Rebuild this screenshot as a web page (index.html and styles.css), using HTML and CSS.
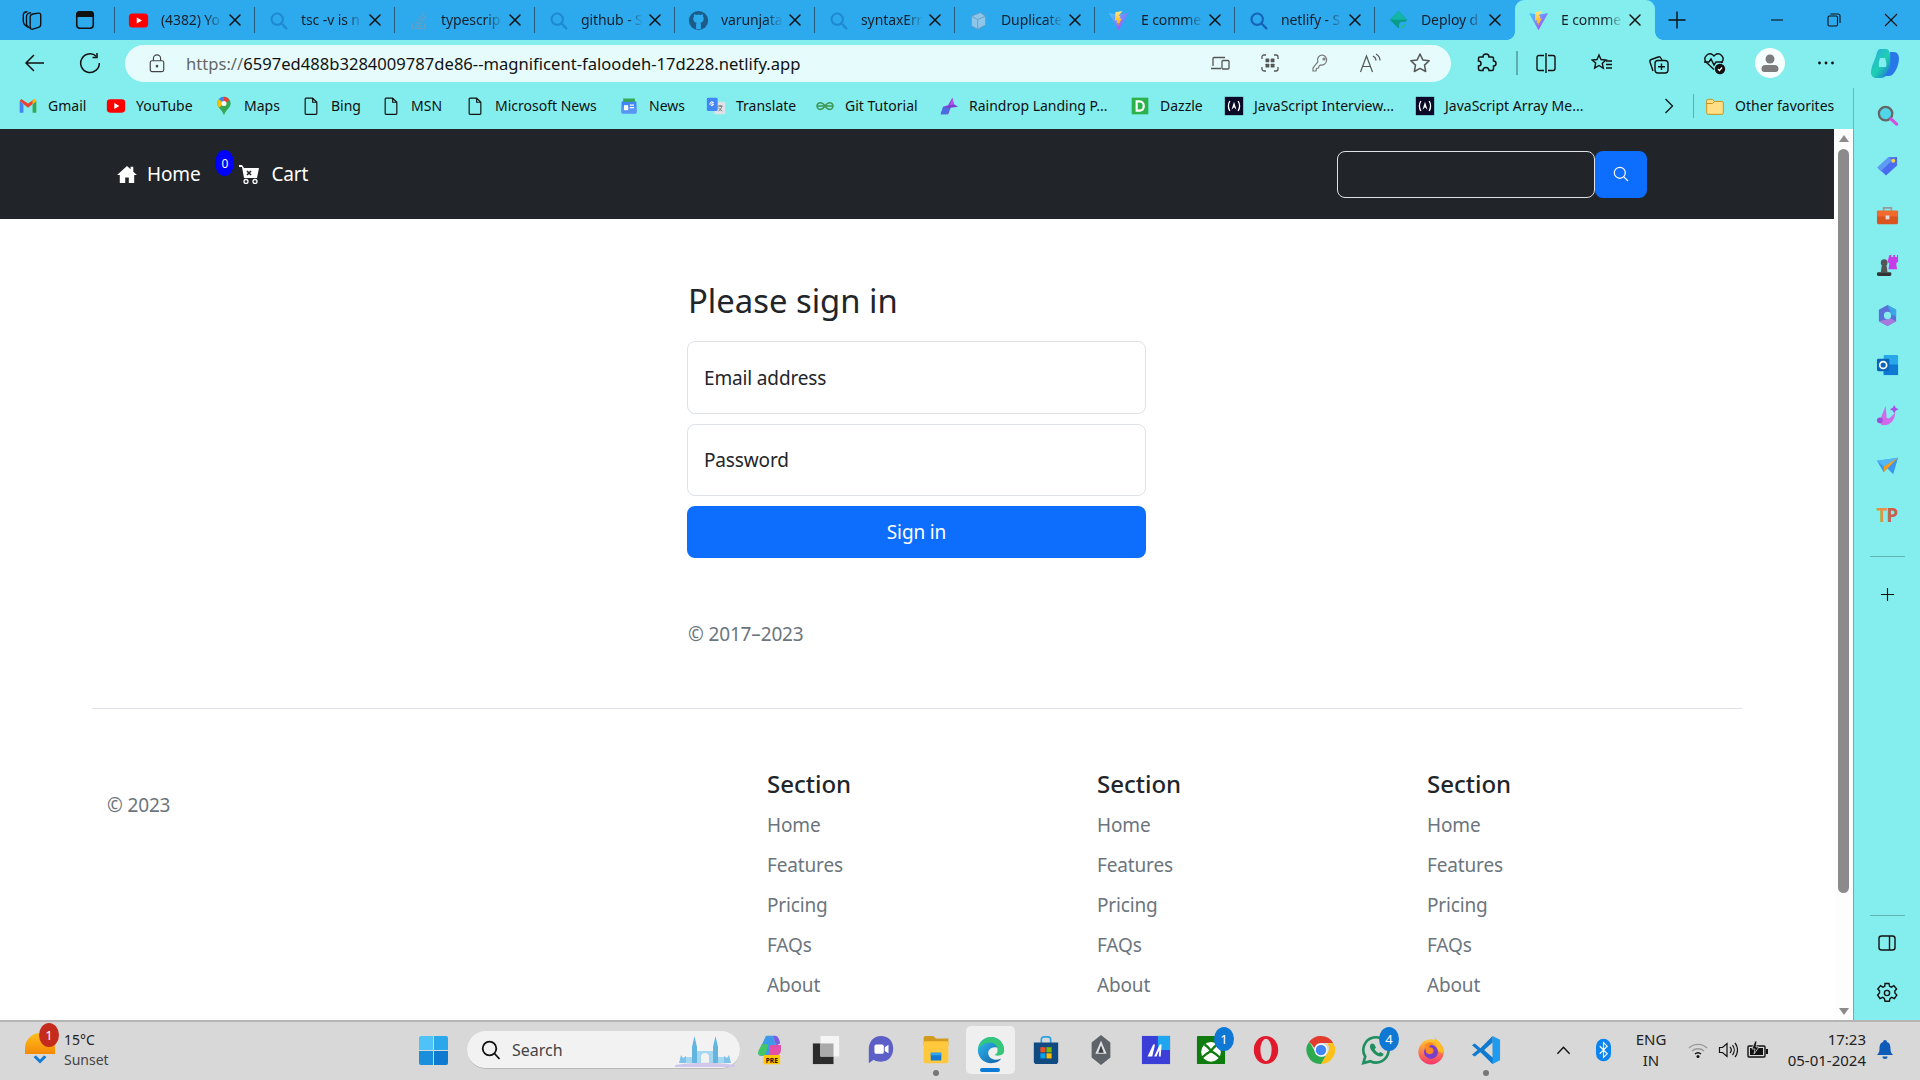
FILE: index.html
```html
<!DOCTYPE html>
<html lang="en">
<head>
<meta charset="utf-8">
<title>E commerce</title>
<link rel="stylesheet" href="styles.css">
</head>
<body>
<svg class="sprite" aria-hidden="true">
  <defs>
    <linearGradient id="g-vite" x1="0" y1="0" x2="1" y2="1"><stop offset="0" stop-color="#41d1ff"/><stop offset="1" stop-color="#bd34fe"/></linearGradient>
    <linearGradient id="g-bolt" x1="0" y1="0" x2="0" y2="1"><stop offset="0" stop-color="#ffea83"/><stop offset="1" stop-color="#ffa800"/></linearGradient>
    <linearGradient id="g-edge" x1="0" y1="0" x2="1" y2="1"><stop offset="0" stop-color="#35c1f1"/><stop offset="1" stop-color="#0c59a4"/></linearGradient>
    <linearGradient id="g-copilot" x1="0" y1="0" x2="1" y2="1"><stop offset="0" stop-color="#2aa7e8"/><stop offset=".5" stop-color="#1fd0b0"/><stop offset="1" stop-color="#1b5fe0"/></linearGradient>
    <linearGradient id="g-fox" x1="0" y1="0" x2="0" y2="1"><stop offset="0" stop-color="#ffcb2e"/><stop offset="1" stop-color="#f5336e"/></linearGradient>
    <linearGradient id="g-sun" x1="0" y1="0" x2="0" y2="1"><stop offset="0" stop-color="#ffbf1f"/><stop offset="1" stop-color="#f58a07"/></linearGradient>
    <symbol id="i-yt" viewBox="0 0 24 24"><rect x="1" y="4" width="22" height="16" rx="4" fill="#f00"/><path d="M10 8.5l6 3.5-6 3.5z" fill="#fff"/></symbol>
    <symbol id="i-search" viewBox="0 0 24 24"><circle cx="10.5" cy="10.5" r="6.5" fill="none" stroke="currentColor" stroke-width="2.4"/><path d="M15.5 15.5L21 21" stroke="currentColor" stroke-width="2.6" stroke-linecap="round"/></symbol>
    <symbol id="i-close" viewBox="0 0 14 14"><path d="M2 2l10 10M12 2L2 12" stroke="#111" stroke-width="1.5" stroke-linecap="round"/></symbol>
    <symbol id="i-doc" viewBox="0 0 24 24"><path d="M6 2.5h8l5 5V21a1 1 0 0 1-1 1H6a1 1 0 0 1-1-1V3.5a1 1 0 0 1 1-1zM14 2.5v5h5" fill="none" stroke="#111" stroke-width="1.4" stroke-linejoin="round"/></symbol>
    <symbol id="i-vite" viewBox="0 0 24 24"><path d="M1 3.5L12 23 23 3.5 12 5.5z" fill="url(#g-vite)"/><path d="M16.5 1L8.5 2.6l-.6 9.6 2.6-.6-.7 3.5 2.2-.5-.7 3.6 4.6-8.8-2.6.5.9-3.2-2.4.5z" fill="url(#g-bolt)"/></symbol>
    <symbol id="i-js" viewBox="0 0 24 24"><rect x="1" y="1" width="22" height="22" fill="#0a0a28"/><path d="M7 6Q3.6 12 7 18M17 6q3.4 6 0 12" fill="none" stroke="#fff" stroke-width="1.6"/><path d="M9 16.5L12 7l3 9.5-3-3z" fill="#fff"/></symbol>
    <symbol id="i-star" viewBox="0 0 24 24"><path d="M12 3l2.8 5.9 6.4.8-4.7 4.4 1.2 6.4L12 17.4l-5.7 3.1 1.2-6.4-4.7-4.4 6.4-.8z" fill="none" stroke="currentColor" stroke-width="1.5" stroke-linejoin="round"/></symbol>
  </defs>
</svg>

<div class="screen">
  <header class="tabstrip">
    <div class="tab-lead">
      <button class="strip-btn"><svg class="ic22" viewBox="0 0 24 24" fill="none" stroke="#111" stroke-width="1.5"><path d="M8 20C4 18 2.5 16 2.5 13V6.5C2.5 4 4 3 7 3M11 21c-3-1-5-2.500-5-5V8c0-3 2-3.500 5-4"/><path d="M10 8.5c0-2 1-2.500 3-3l6-1c1.500-.2 2.500.5 2.500 2v10c0 2-.8 3-2.500 3.500l-6 2c-2 .5-3-.5-3-2z"/></svg></button>
      <button class="strip-btn"><svg class="ic22" viewBox="0 0 24 24" fill="none" stroke="#111" stroke-width="1.7"><rect x="3" y="3" width="18" height="18" rx="3.5"/><path d="M3 6.5A3.500 3.500 0 0 1 6.500 3h11A3.500 3.500 0 0 1 21 6.500V8H3z" fill="#111"/></svg></button>
    </div>
    <div class="tab"><svg class="fav"><use href="#i-yt"/></svg><span class="tab-t">(4382) Yo</span><svg class="tab-x"><use href="#i-close"/></svg></div>
    <div class="tab"><svg class="fav dim"><use href="#i-search"/></svg><span class="tab-t">tsc -v is n</span><svg class="tab-x"><use href="#i-close"/></svg></div>
    <div class="tab"><svg class="fav" viewBox="0 0 24 24" fill="none" stroke="#5fa0c8" stroke-width="1.6"><path d="M5 15v6h14v-6"/><path d="M8 18h8M8.500 14.500l7.500 1M10 10.500l7 2.500M12.500 6.500l6 4.500M16 3l4 6.500"/></svg><span class="tab-t">typescrip</span><svg class="tab-x"><use href="#i-close"/></svg></div>
    <div class="tab"><svg class="fav dim"><use href="#i-search"/></svg><span class="tab-t">github - S</span><svg class="tab-x"><use href="#i-close"/></svg></div>
    <div class="tab"><svg class="fav" viewBox="0 0 24 24"><circle cx="12" cy="12" r="11" fill="#1c5a87"/><path d="M12 5c-1 0-2 .2-2.800.6C8 4.800 7 4.800 6.800 5c-.3.800-.2 1.700.1 2.300C6.300 8 6 9 6 10c0 3 1.800 4.300 4 4.600-.5.400-.7 1-.7 1.800V22h5.400v-5.600c0-.8-.2-1.400-.7-1.800 2.200-.3 4-1.600 4-4.600 0-1-.3-2-.9-2.700.3-.6.400-1.500.1-2.300-.2-.2-1.200-.2-2.400.6C14 5.200 13 5 12 5z" fill="#2caaee"/></svg><span class="tab-t">varunjata</span><svg class="tab-x"><use href="#i-close"/></svg></div>
    <div class="tab"><svg class="fav dim"><use href="#i-search"/></svg><span class="tab-t">syntaxErr</span><svg class="tab-x"><use href="#i-close"/></svg></div>
    <div class="tab"><svg class="fav" viewBox="0 0 24 24" fill="#8cc6ea" stroke="#6f9cb8" stroke-width="1"><path d="M4 7l10-4 6 4v10l-9 5-7-4z"/><path d="M4 7l7 4 9-4M11 11v11" fill="none"/></svg><span class="tab-t">Duplicate</span><svg class="tab-x"><use href="#i-close"/></svg></div>
    <div class="tab"><svg class="fav"><use href="#i-vite"/></svg><span class="tab-t">E comme</span><svg class="tab-x"><use href="#i-close"/></svg></div>
    <div class="tab"><svg class="fav strong"><use href="#i-search"/></svg><span class="tab-t">netlify - S</span><svg class="tab-x"><use href="#i-close"/></svg></div>
    <div class="tab no-sep"><svg class="fav" viewBox="0 0 24 24"><path d="M12 1l10 10-10 10L2 11z" fill="#0a9a8c"/><path d="M2 11h20L12 1z" fill="#13b5a5"/><circle cx="17" cy="18" r="4.5" fill="#2caaee"/><path d="M14.800 18l1.600 1.700 2.800-3.200" fill="none" stroke="#25c16f" stroke-width="1.5"/></svg><span class="tab-t">Deploy d</span><svg class="tab-x"><use href="#i-close"/></svg></div>
    <div class="tab active"><svg class="fav"><use href="#i-vite"/></svg><span class="tab-t">E comme</span><svg class="tab-x"><use href="#i-close"/></svg></div>
    <button class="plus"><svg class="ic20" viewBox="0 0 20 20"><path d="M10 1.500v17M1.500 10h17" stroke="#111" stroke-width="1.4"/></svg></button>
    <div class="win-btns">
      <button class="win-btn"><svg class="ic14" viewBox="0 0 14 14"><path d="M1 7h12" stroke="#111" stroke-width="1.1"/></svg></button>
      <button class="win-btn"><svg class="ic14" viewBox="0 0 14 14" fill="none" stroke="#111" stroke-width="1.1"><rect x="1" y="3" width="9.5" height="10" rx="1.5"/><path d="M3.500 1H11a2 2 0 0 1 2 2v7"/></svg></button>
      <button class="win-btn"><svg class="ic14" viewBox="0 0 14 14"><path d="M1 1l12 12M13 1L1 13" stroke="#111" stroke-width="1.1"/></svg></button>
    </div>
  </header>

  <div class="toolbar">
    <button class="nav-btn"><svg class="ic22" viewBox="0 0 22 22" fill="none" stroke="#111" stroke-width="1.5"><path d="M20 11H2.500M10 3l-8 8 8 8"/></svg></button>
    <button class="nav-btn"><svg class="ic22" viewBox="0 0 22 22" fill="none" stroke="#111" stroke-width="1.5"><path d="M17.500 4.500A9.300 9.300 0 1 0 20.300 11"/><path d="M18 1v4.500h-4.500"/></svg></button>
    <div class="address">
      <svg class="lock" viewBox="0 0 20 22" fill="none" stroke="#444" stroke-width="1.3"><rect x="2.5" y="8.5" width="15" height="12" rx="2"/><path d="M6 8.500V6a4 4 0 0 1 8 0v2.500"/><circle cx="10" cy="14.5" r=".8" fill="#444"/></svg>
      <div class="url"><span class="url-scheme">https://</span>6597ed488b3284009787de86--magnificent-faloodeh-17d228.netlify.app</div>
      <button class="addr-btn"><svg class="ic20" viewBox="0 0 20 20" fill="none" stroke="#555" stroke-width="1.3"><path d="M3 13V5.500a1 1 0 0 1 1-1h11M1 15.500h10"/><rect x="12" y="7.5" width="7" height="8.5" rx="1"/></svg></button>
      <button class="addr-btn"><svg class="ic20" viewBox="0 0 20 20" fill="none" stroke="#555" stroke-width="1.3"><path d="M2 6V4a2 2 0 0 1 2-2h2M14 2h2a2 2 0 0 1 2 2v2M18 14v2a2 2 0 0 1-2 2h-2M6 18H4a2 2 0 0 1-2-2v-2"/><rect x="5.500" y="5.500" width="3.8" height="3.8" rx=".6" fill="#555" stroke="none"/><rect x="10.700" y="5.500" width="3.8" height="3.8" rx=".6" fill="#555" stroke="none"/><rect x="5.500" y="10.700" width="3.8" height="3.8" rx=".6" fill="#555" stroke="none"/><rect x="10.700" y="10.700" width="3.8" height="3.8" rx=".6" fill="#555" stroke="none"/></svg></button>
      <button class="addr-btn"><svg class="ic20" viewBox="0 0 20 20" fill="none" stroke="#777" stroke-width="1.2"><path d="M12.500 2a5 5 0 0 0-4.700 6.800L3 15v3h3l.5-2.500 2-.5.5-2 1.500-1a5 5 0 1 0 2-10z"/><circle cx="14" cy="6" r="1"/></svg></button>
      <button class="addr-btn"><svg class="ic22" viewBox="0 0 22 22" fill="none" stroke="#555" stroke-width="1.2"><path d="M1.500 20L7.500 4l6 16M3.700 14.500h7.500M14 4c2 1 3 2.500 3 4.500M17 2c2.500 1.500 4 4 4 6.500"/></svg></button>
      <button class="addr-btn star"><svg class="ic24"><use href="#i-star"/></svg></button>
    </div>
    <button class="tool-btn first"><svg class="ic22" viewBox="0 0 22 22" fill="none" stroke="#111" stroke-width="1.5"><path d="M8 5a3 3 0 0 1 6 0h3a1.500 1.500 0 0 1 1.500 1.500V9a2.500 2.500 0 0 1 0 5v3a1.500 1.500 0 0 1-1.500 1.500h-3a3 3 0 0 0-6 0H5A1.500 1.500 0 0 1 3.500 17v-3a2.500 2.500 0 0 0 0-5V6.500A1.500 1.500 0 0 1 5 5z"/></svg></button>
    <span class="tool-sep"></span>
    <button class="tool-btn"><svg class="ic22" viewBox="0 0 22 22" fill="none" stroke="#111" stroke-width="1.4"><path d="M9 3.500H4a2 2 0 0 0-2 2v11a2 2 0 0 0 2 2h5M13 3.500h5a2 2 0 0 1 2 2v11a2 2 0 0 1-2 2h-5M11 1v20"/></svg></button>
    <button class="tool-btn"><svg class="ic22" viewBox="0 0 22 22" fill="none" stroke="#111" stroke-width="1.4"><path d="M8 3l2 4.500 5 .5-3.700 3.300 1 5L8 13.500 3.700 16l1-5L1 8l5-.5z"/><path d="M15 9h6M15 12.500h6M15 16h6"/></svg></button>
    <button class="tool-btn"><svg class="ic24" viewBox="0 0 24 24" fill="none" stroke="#111" stroke-width="1.4"><path d="M7 20l-3-9a2 2 0 0 1 1.300-2.500l7-2.500a2 2 0 0 1 2.500 1L16 9"/><rect x="9" y="9.5" width="13" height="12.5" rx="3"/><path d="M15.500 12.500v6.500M12 15.700h7"/></svg></button>
    <button class="tool-btn"><svg class="ic24" viewBox="0 0 24 24" fill="none" stroke="#111" stroke-width="1.4"><path d="M12 18.500L4 11a5 5 0 0 1 7-7l1 1 1-1a5 5 0 0 1 7 7l-1 1"/><path d="M2 11h5l2-3 3 6 2-3h7"/><circle cx="18" cy="18" r="4.5" fill="#111"/><path d="M16 18l1.500 1.500 2.500-3" stroke="#fff" stroke-width="1.2"/></svg></button>
    <button class="tool-btn"><span class="avatar"><svg class="ic20" viewBox="0 0 20 20" fill="#7c7c7c"><circle cx="10" cy="6" r="4.5"/><path d="M1.500 16a4 4 0 0 1 4-4h9a4 4 0 0 1 4 4 3 3 0 0 1-3 3h-11a3 3 0 0 1-3-3z"/></svg></span></button>
    <button class="tool-btn"><svg class="ic20" viewBox="0 0 20 20" fill="#111"><circle cx="3.5" cy="10" r="1.4"/><circle cx="10" cy="10" r="1.4"/><circle cx="16.5" cy="10" r="1.4"/></svg></button>
    <button class="tool-btn copilot"><svg class="ic32" viewBox="0 0 32 32"><path d="M11 2h6c2 0 3 1.500 3.500 3L24 18c-1 4-3 7-6 10-2 2-4 3-6 3H7c-2 0-5-2-5-5 0-6 3-11 5-17 1-4 2-7 4-7z" fill="url(#g-copilot)"/><path d="M21 5h4c3 0 5 3 5 6 0 5-2 11-5 15-1.500 2-3 3-5 3h-5c2-2 5-6 6-10 1-4 0-11 0-14z" fill="#2877e8"/><path d="M11 11l5 0c1 3 2 6 1 9l-7 0c-.5-3 0-6 1-9z" fill="#84eeee"/></svg></button>
  </div>

  <div class="workspace">
    <div class="main-col">
      <nav class="bookmarks">
        <a class="bm"><svg class="bm-i" viewBox="0 0 24 24"><path d="M2 6v14h4.500V10z" fill="#4285f4"/><path d="M22 6v14h-4.500V10z" fill="#34a853"/><path d="M2 6l10 8 10-8-2-2.500L12 9 4 3.500z" fill="#ea4335"/><path d="M17.500 10L22 6l-2-2.500-2.500 2z" fill="#fbbc04"/></svg>Gmail</a>
        <a class="bm"><svg class="bm-i"><use href="#i-yt"/></svg>YouTube</a>
        <a class="bm"><svg class="bm-i" viewBox="0 0 24 24"><path d="M12 1a8 8 0 0 0-8 8c0 5 6 8 8 14 2-6 8-9 8-14a8 8 0 0 0-8-8z" fill="#34a853"/><path d="M12 1a8 8 0 0 0-6 2.700L12 9V1z" fill="#4285f4"/><path d="M12 1v8l6.500-4A8 8 0 0 0 12 1z" fill="#ea4335"/><path d="M4 9c0 2 1 3.500 2 5l6-5-6-5a8 8 0 0 0-2 5z" fill="#fbbc04"/><circle cx="12" cy="9" r="3" fill="#fff"/></svg>Maps</a>
        <a class="bm"><svg class="bm-i"><use href="#i-doc"/></svg>Bing</a>
        <a class="bm"><svg class="bm-i"><use href="#i-doc"/></svg>MSN</a>
        <a class="bm"><svg class="bm-i"><use href="#i-doc"/></svg>Microsoft News</a>
        <a class="bm"><svg class="bm-i" viewBox="0 0 24 24"><rect x="3" y="6" width="18" height="15" rx="2" fill="#4285f4"/><path d="M5 3h14v4H5z" fill="#34a853"/><path d="M3 13h18v8H3z" fill="#5a95f5"/><rect x="6" y="11" width="5" height="6" fill="#fff"/><path d="M13 11h5M13 14h5" stroke="#fff" stroke-width="1.5"/></svg>News</a>
        <a class="bm"><svg class="bm-i" viewBox="0 0 24 24"><rect x="10" y="7" width="13" height="15" rx="1.5" fill="#dfe3e8"/><rect x="1" y="2" width="13" height="16" rx="1.5" fill="#4285f4"/><path d="M9.500 8H7v2h2.200a2.300 2.300 0 1 1-.7-2.500" fill="none" stroke="#fff" stroke-width="1.2"/><path d="M14 12h6M17 11v2M15 18c2-1 3.500-3 4-6M15 14c1 2 2.500 3 4.500 4" fill="none" stroke="#666" stroke-width="1"/></svg>Translate</a>
        <a class="bm"><svg class="bm-i" viewBox="0 0 24 24" fill="none" stroke="#3f9a5a" stroke-width="1.9"><path d="M2 12h20"/><path d="M12 12c-2-3-3.500-4-5.500-4a4 4 0 0 0 0 8c2 0 3.500-1 5.500-4s3.500-4 5.500-4a4 4 0 0 1 0 8c-2 0-3.500-1-5.500-4z"/></svg>Git Tutorial</a>
        <a class="bm"><svg class="bm-i" viewBox="0 0 24 24"><path d="M2 22l3-9 6-2 5-9 2 8 5 3-9 1-3 8z" fill="#7e3fd0"/><path d="M2 22l3-9 8 2-3 7z" fill="#4a6ee0"/><path d="M16 2l2 8-5 1z" fill="#c24fe8"/></svg>Raindrop Landing P...</a>
        <a class="bm"><svg class="bm-i" viewBox="0 0 24 24"><rect x="2" y="2" width="20" height="20" fill="#2bb24c"/><path d="M8 6.500v11h3.500c3 0 5-2 5-5.500s-2-5.500-5-5.500z" fill="none" stroke="#fff" stroke-width="2.6"/></svg>Dazzle</a>
        <a class="bm"><svg class="bm-i"><use href="#i-js"/></svg>JavaScript Interview...</a>
        <a class="bm"><svg class="bm-i"><use href="#i-js"/></svg>JavaScript Array Me...</a>
        <button class="bm-more"><svg class="ic16" viewBox="0 0 16 16" fill="none" stroke="#111" stroke-width="1.3"><path d="M4.500 1l7 7-7 7"/></svg></button>
        <span class="bm-sep"></span>
        <a class="bm"><svg class="bm-i" viewBox="0 0 24 24"><path d="M2 6a2 2 0 0 1 2-2h5l2.500 2.500H20a2 2 0 0 1 2 2V20a2 2 0 0 1-2 2H4a2 2 0 0 1-2-2z" fill="#ffdf85" stroke="#c9921a" stroke-width="1.2"/><path d="M2 9h7l2.500-2.500" fill="none" stroke="#c9921a" stroke-width="1.2"/></svg>Other favorites</a>
      </nav>
      <div class="viewport">
        <div class="page">
          <div class="site-nav">
            <a class="site-link"><svg class="ic22 home-i" viewBox="0 0 22 20" fill="#fff"><path d="M11 1L0 11h3v9h6v-6h4v6h6v-9h3l-4-3.600V2h-3v2.700z"/></svg>Home</a>
            <span class="cart-badge">0</span>
            <a class="site-link cart-link"><svg class="ic20" viewBox="0 0 20 20"><path d="M0 1h3l2 3h15l-2 10H5L3 3H0z" fill="#fff"/><path d="M8 7l4 4M12 7l-4 4" stroke="#212529" stroke-width="1.6"/><circle cx="7" cy="17.5" r="2" fill="#212529" stroke="#fff" stroke-width="1.3"/><circle cx="16" cy="17.5" r="2" fill="#212529" stroke="#fff" stroke-width="1.3"/></svg>Cart</a>
            <form class="site-search">
              <input class="site-search-in" type="text" aria-label="Search">
              <button class="site-search-btn" type="button"><svg class="ic16" viewBox="0 0 16 16" fill="none" stroke="#fff" stroke-width="1.2"><circle cx="6.8" cy="6.8" r="5.5"/><path d="M10.800 10.800L15 15"/></svg></button>
            </form>
          </div>
          <main class="signin">
            <h1 class="signin-title">Please sign in</h1>
            <input class="field" type="email" placeholder="Email address">
            <input class="field field-b" type="password" placeholder="Password">
            <button class="signin-btn" type="button">Sign in</button>
            <p class="signin-copy">© 2017–2023</p>
          </main>
          <footer class="site-footer">
            <div class="foot-copy">© 2023</div>
            <section class="foot-col"><h5>Section</h5><ul><li>Home</li><li>Features</li><li>Pricing</li><li>FAQs</li><li>About</li></ul></section>
            <section class="foot-col"><h5>Section</h5><ul><li>Home</li><li>Features</li><li>Pricing</li><li>FAQs</li><li>About</li></ul></section>
            <section class="foot-col"><h5>Section</h5><ul><li>Home</li><li>Features</li><li>Pricing</li><li>FAQs</li><li>About</li></ul></section>
          </footer>
        </div>
        <div class="scrollbar">
          <span class="sb-up"></span>
          <span class="sb-thumb"></span>
          <span class="sb-down"></span>
        </div>
      </div>
    </div>
    <aside class="sidebar">
      <div class="side-top">
        <svg class="side-i" viewBox="0 0 24 24"><circle cx="10" cy="10" r="7" fill="#4fd6e8" stroke="#666" stroke-width="2.4"/><path d="M15.500 15.500l6 5.500" stroke="#d34fe0" stroke-width="3.4" stroke-linecap="round"/></svg>
        <svg class="side-i" viewBox="0 0 24 24"><path d="M1.500 14L13 3.500l9-.5v9L10.500 22.500z" fill="#4a6cf0"/><path d="M1.500 14L13 3.500l4 3L5 18z" fill="#5e9bf5"/><circle cx="18" cy="7" r="2" fill="#ffd23c"/></svg>
        <svg class="side-i" viewBox="0 0 24 24"><path d="M8 7V4h8v3" fill="none" stroke="#999" stroke-width="1.8"/><rect x="1" y="7" width="22" height="14" rx="1.5" fill="#d9541e"/><rect x="1" y="7" width="22" height="6" fill="#ef6a2c"/><rect x="10" y="12" width="4" height="4" fill="#ddd"/></svg>
        <svg class="side-i" viewBox="0 0 24 24"><circle cx="8.5" cy="9" r="3.5" fill="#555"/><path d="M6 12h5l1 7H5z" fill="#555"/><rect x="1" y="19" width="15" height="4" rx="1.5" fill="#333"/><path d="M14 1h2v2h2V1h2v2h2V1h1v7l-2 2 1 6h-9l1-6-2-2z" fill="#c63ce8"/></svg>
        <svg class="side-i" viewBox="0 0 24 24"><path d="M12 1l9 5v12l-9 5-9-5V6z" fill="#5b6fd8"/><path d="M12 1l9 5v7l-5-2-2-5z" fill="#3aa8e8"/><path d="M3 18l9 5 9-5-6-3z" fill="#a878dc"/><circle cx="12" cy="12" r="3.8" fill="#84eeee"/></svg>
        <svg class="side-i" viewBox="0 0 24 24"><rect x="8" y="1" width="15" height="21" rx="1" fill="#28a8ea"/><path d="M8 11l15 0v11H8z" fill="#0f78d4"/><rect x="1" y="5" width="13" height="13" rx="1.5" fill="#0a64b8"/><circle cx="7.5" cy="11.5" r="3.6" fill="none" stroke="#fff" stroke-width="1.8"/></svg>
        <svg class="side-i" viewBox="0 0 24 24"><path d="M10 2L4 17a4 4 0 0 0 5 5c6 0 11-6 11-13l-5 5c-2 2-5 1-4-2z" fill="#d06ae8"/><circle cx="4" cy="17" r="3" fill="#9c4fd8"/><path d="M19 1l1.500 3 3 1.500-3 1.500L19 10l-1.500-3-3-1.500 3-1.500z" fill="#a84fe8"/></svg>
        <svg class="side-i" viewBox="0 0 24 24"><path d="M1 7l22-3-5 17-6-6-4 4z" fill="#3a97ef"/><path d="M1 7l22-3L8 13z" fill="#53b8f5"/><path d="M8 13l15-9-15 15z" fill="#f2a01e"/></svg>
        <div class="side-tp"><span class="tp-t">T</span><span class="tp-p">P</span></div>
        <span class="side-sep"></span>
        <svg class="side-add" viewBox="0 0 16 16"><path d="M8 1v14M1 8h14" stroke="#111" stroke-width="1.2"/></svg>
      </div>
      <div class="side-bottom">
        <span class="side-sep"></span>
        <svg class="side-panel" viewBox="0 0 20 20" fill="none" stroke="#111" stroke-width="1.4"><rect x="2" y="3" width="16" height="14" rx="2.5"/><path d="M12.500 3v14"/></svg>
        <svg class="side-gear" viewBox="0 0 22 22" fill="none" stroke="#111" stroke-width="1.4"><path d="M9 1.500h4l.6 2.800 1.800.8 2.500-1.500 2.700 3.400-1.800 2 .1 2 1.900 2-2.400 3.600-2.600-1.200-1.800 1-.6 2.800H9l-.6-2.800-1.800-1-2.600 1.200L1.600 13l1.900-2 .1-2-1.800-2 2.700-3.400 2.500 1.500 1.800-.8z"/><circle cx="11" cy="11" r="2.6"/></svg>
      </div>
    </aside>
  </div>

  <footer class="taskbar">
    <div class="weather">
      <div class="weather-icon">
        <svg class="sun" viewBox="0 0 32 48"><path d="M1 28V22A15 15 0 0 1 31 22V28z" fill="url(#g-sun)"/><path d="M9.500 31l6.500 6.500 6.500-6.500-2.500-1.500-4 4-4-4z" fill="#0f7bd8"/></svg>
        <span class="weather-badge">1</span>
      </div>
      <div class="weather-text"><span class="w-temp">15°C</span><span class="w-name">Sunset</span></div>
    </div>
    <div class="task-center">
      <svg class="start" viewBox="0 0 30 30"><path d="M0 2a2 2 0 0 1 2-2h12.500v14.500H0z" fill="#4fc3f7"/><path d="M15.500 0H28a2 2 0 0 1 2 2v12.500H15.500z" fill="#29a8ec"/><path d="M0 15.500h14.500V30H2a2 2 0 0 1-2-2z" fill="#1c8fdc"/><path d="M15.500 15.500H30V28a2 2 0 0 1-2 2H15.500z" fill="#0f7ad0"/></svg>
      <div class="task-search">
        <svg class="ic20" viewBox="0 0 20 20" fill="none" stroke="#111" stroke-width="1.8"><circle cx="8.5" cy="8.5" r="6.8"/><path d="M13.500 13.500L18.500 19"/></svg>
        <span class="task-search-t">Search</span>
        <svg class="mosque" viewBox="0 0 60 32"><path d="M0 30c20-3 40-3 60 0v2H0z" fill="#cfc8ec"/><path d="M17 28V12l2.500-11L22 12v16zM38 28V12l2.500-11L43 12v16z" fill="#63b5e0"/><path d="M22 28V16h16v12h-4v-6a4 4 0 0 0-8 0v6z" fill="#a5d8f0"/><path d="M4 28l2-8 2 3 3-2v7zM56 28l-2-8-2 3-3-2v7z" fill="#7fc4e8"/><path d="M11 28v-6h6v6zM43 28v-6h6v6z" fill="#a5d8f0"/></svg>
      </div>
      <span class="task-i"><svg class="ic32" viewBox="0 0 32 36"><path d="M10 1h8l4 12-9 12H4C2 25 0 23 1 20z" fill="#3c9ae8"/><path d="M18 1h3c3 0 5 4 6 9l-5 3z" fill="#7a5fe0"/><path d="M4 25C1 25 0 22 1 19l4-8h8L9 25z" fill="#43c668"/><path d="M15 12h13v6c0 4-3 7-7 7h-8z" fill="#e251a8"/><rect x="7" y="24" width="20" height="11" rx="1" fill="#ffc800"/><text class="pre" x="17" y="33" text-anchor="middle">PRE</text></svg></span>
      <span class="task-i"><svg class="ic32" viewBox="0 0 32 32"><rect x="2" y="9" width="22" height="22" fill="#2b2b2b"/><rect x="10" y="1" width="20" height="22" rx="1" fill="#f5f5f5"/><rect x="10" y="9" width="14" height="14" fill="#aaa"/></svg></span>
      <span class="task-i"><svg class="ic32" viewBox="0 0 32 32"><path d="M16 1C8 1 3 7 3 15v15l5-3.500c2.500 1.500 5 2 8 2 8 0 13-6 13-14S24 1 16 1z" fill="#5b5fc7"/><rect x="9" y="10" width="10" height="10" rx="2" fill="#fff"/><path d="M20 13l4-2.500v9L20 17z" fill="#fff"/></svg></span>
      <span class="task-i files"><svg class="ic32" viewBox="0 0 32 34"><path d="M2 3a2 2 0 0 1 2-2h9l3 3h14v8H2z" fill="#d29a1e"/><path d="M2 7h28v23a2 2 0 0 1-2 2H4a2 2 0 0 1-2-2z" fill="#ffc83d"/><rect x="10" y="20" width="12" height="9" rx="1" fill="#0f7ad0"/><rect x="10" y="20" width="12" height="3" fill="#35a5ee"/></svg></span>
      <span class="task-i edge"><svg class="ic32" viewBox="0 0 32 32"><path d="M30 17C30 8 24 2 16 2 8 2 2 8 2 16c0 9 7 14 14 14 5 0 9-2 11-5-6 3-13 1-14-5-.5-4 3-7 7-7s6 2 6 4h4z" fill="url(#g-edge)"/><path d="M2 16C3 8 9 2 16 2c8 0 14 6 14 15 0 3-3 5-7 5-2 0-3-1-3-1 2-1 3-2 3-5 0-5-4-8-8-8-6 0-10 3-13 8z" fill="#35c87a"/></svg></span>
      <span class="task-i"><svg class="ic32" viewBox="0 0 32 32"><path d="M11 9V5a3 3 0 0 1 3-3h4a3 3 0 0 1 3 3v4" fill="none" stroke="#2aa4e0" stroke-width="1.8"/><path d="M3 8h26v20a3 3 0 0 1-3 3H6a3 3 0 0 1-3-3z" fill="#0f4a82"/><rect x="10" y="13" width="5.5" height="5.5" fill="#f25022"/><rect x="16.5" y="13" width="5.5" height="5.5" fill="#7fba00"/><rect x="10" y="19.5" width="5.5" height="5.5" fill="#00a4ef"/><rect x="16.5" y="19.5" width="5.5" height="5.5" fill="#ffb900"/></svg></span>
      <span class="task-i"><svg class="ic32" viewBox="0 0 32 32"><path d="M16 0l10 8v16l-10 8-10-8V8z" fill="#5d6368"/><path d="M16 6l6 14H10z" fill="#dfe3e6"/><path d="M16 11l3 8h-6z" fill="#3c4043"/></svg></span>
      <span class="task-i"><svg class="ic32" viewBox="0 0 32 32"><rect x="1" y="1" width="30" height="30" fill="#3b3fd8"/><rect x="18" y="1" width="13" height="15" fill="#1fa6ee"/><path d="M7 23l6-13h2l-3 13zM14 23l6-13h2l-1 13h-2l.5-7-3 7z" fill="#fff"/></svg></span>
      <span class="task-i badged"><svg class="ic32" viewBox="0 0 32 32"><rect x="1" y="1" width="30" height="30" rx="1" fill="#107c10"/><circle cx="16" cy="18" r="10.500" fill="#fff"/><path d="M9 10.500c3 1 5 3.500 7 6.500 2-3 4-5.500 7-6.500M6.500 24c3-3 6-5 9.500-7 3.500 2 6.500 4 9.500 7" fill="none" stroke="#107c10" stroke-width="2.6"/></svg><span class="app-badge">1</span></span>
      <span class="task-i"><svg class="ic32" viewBox="0 0 32 32"><ellipse cx="16" cy="16" rx="13" ry="15" fill="#e0192c"/><ellipse cx="16" cy="16" rx="6" ry="12" fill="#d8d8d8"/></svg></span>
      <span class="task-i"><svg class="ic32" viewBox="0 0 32 32"><path d="M16 1a15 15 0 0 1 13 7.500H16a7.500 7.500 0 0 0-7 5L3.500 7A15 15 0 0 1 16 1z" fill="#e33b2e"/><path d="M29 8.500A15 15 0 0 1 16 31l6.500-11.300A7.500 7.500 0 0 0 22.500 9z" fill="#fbc116"/><path d="M3.500 7L10 18.500A7.500 7.500 0 0 0 21 22l-5 9A15 15 0 0 1 3.500 7z" fill="#2da94f"/><circle cx="16" cy="16" r="7" fill="#fff"/><circle cx="16" cy="16" r="5.6" fill="#4285f4"/></svg></span>
      <span class="task-i badged"><svg class="ic32" viewBox="0 0 32 32" fill="none"><path d="M2.500 30l2-7A13.500 13.500 0 1 1 10 28z" stroke="#1f8f5f" stroke-width="2.8"/><path d="M11 9c-2 2-2 5 1 8.500S18 23 21 23c2 0 3.500-2 3-3l-3.500-2-1.500 1.500c-1.500-.5-4-3-4.500-4.500l1.500-1.500-2-4z" fill="#1f8f5f"/></svg><span class="app-badge">4</span></span>
      <span class="task-i"><svg class="ic32" viewBox="0 0 32 32"><circle cx="16" cy="18" r="13.5" fill="url(#g-fox)"/><path d="M20 1c1 5 7 6 9 15 1 5-2 3-5 1-2-2-3-8-4-16z" fill="#ffbd1f"/><circle cx="16" cy="18" r="7.5" fill="#7b3fc8"/><path d="M9 11c3-4 8-4 10-1-3 0-5 1-5 3 4 0 6 3 4 6-1 2-5 2-7 0" fill="#ff8a1f"/></svg></span>
      <span class="task-i code"><svg class="ic32" viewBox="0 0 32 32"><path d="M23 1l8 4v22l-8 4-13-13 13-10z" fill="#1f9cf0"/><path d="M23 1v30L10 18l-6 5-3-2 6-5-6-5 3-2 6 5z" fill="#0f7ad0"/><path d="M23 8v16l-9-8z" fill="#d8d8d8"/></svg></span>
    </div>
    <div class="tray">
      <svg class="tray-up" viewBox="0 0 16 10" fill="none" stroke="#111" stroke-width="1.5"><path d="M1.500 9L8 2l6.500 7"/></svg>
      <svg class="tray-bt" viewBox="0 0 16 24"><rect x="0" y="0" width="16" height="24" rx="8" fill="#0a84f0"/><path d="M4 8l8 8-4 4V4l4 4-8 8" fill="none" stroke="#fff" stroke-width="1.2"/></svg>
      <div class="lang"><span>ENG</span><span>IN</span></div>
      <svg class="tray-wifi" viewBox="0 0 20 20" fill="none" stroke="#999" stroke-width="1.4"><path d="M1 8a13 13 0 0 1 18 0M4 11a9 9 0 0 1 12 0"/><path d="M7 14a4.500 4.500 0 0 1 6 0" stroke="#111"/><circle cx="10" cy="16.5" r="1.5" fill="#111" stroke="none"/></svg>
      <svg class="tray-vol" viewBox="0 0 20 20" fill="none" stroke="#111" stroke-width="1.2"><path d="M1.500 7.500h3L9 3.500v13l-4.500-4h-3z"/><path d="M12 7a4.500 4.500 0 0 1 0 6M14.500 5a8 8 0 0 1 0 10M17 3a11 11 0 0 1 0 14"/></svg>
      <svg class="tray-bat" viewBox="0 0 22 20"><path d="M1 7a1 1 0 0 1 1-1h15a1 1 0 0 1 1 1v9a1 1 0 0 1-1 1H2a1 1 0 0 1-1-1z" fill="none" stroke="#111" stroke-width="1.4"/><rect x="3" y="8" width="13" height="7" fill="#111"/><rect x="19" y="9" width="2" height="5" fill="#111"/><path d="M8 1L5 9h3l-1 5 5-7H9l1-6z" fill="#111" stroke="#d8d8d8" stroke-width=".8"/></svg>
      <div class="clock"><span>17:23</span><span>05-01-2024</span></div>
      <svg class="tray-bell" viewBox="0 0 16 20" fill="#0f5cb8"><path d="M8 0a2 2 0 0 1 2 2c3 1 3.500 4 3.500 7 0 3 1 4 2.500 6H0c1.500-2 2.500-3 2.500-6 0-3 .5-6 3.500-7a2 2 0 0 1 2-2z"/><path d="M5.500 16.500h5a2.500 2.500 0 0 1-5 0z"/></svg>
    </div>
  </footer>
</div>
</body>
</html>
```
FILE: styles.css
```css
* { box-sizing: border-box; }
html, body { margin: 0; padding: 0; }
body { width: 1920px; height: 1080px; overflow: hidden; font-family: "Noto Sans", "Liberation Sans", sans-serif; }
button { border: 0; background: none; padding: 0; display: flex; align-items: center; justify-content: center; font: inherit; }
svg { display: block; flex: none; }
.sprite { width: 0; height: 0; }
.ic14 { width: 14px; height: 14px; }
.ic16 { width: 16px; height: 16px; }
.ic20 { width: 20px; height: 20px; }
.ic22 { width: 22px; height: 22px; }
.ic24 { width: 24px; height: 24px; }
.ic32 { width: 32px; height: 32px; }

.screen { width: 1920px; height: 1080px; display: flex; flex-direction: column; background: #84eeee; overflow: hidden; }

/* tab strip */
.tabstrip { height: 40px; flex: none; background: #2daaee; display: flex; align-items: center; }
.tab-lead { width: 115px; height: 26px; display: flex; padding-left: 5px; border-right: 1px solid #28597a; flex: none; align-items: center; }
.strip-btn { width: 53px; height: 26px; }
.tab { width: 140px; height: 26px; flex: none; display: flex; align-items: center; padding-left: 13px; border-right: 1px solid #28597a; position: relative; }
.tab.no-sep { border-right-color: transparent; }
.tab .fav { width: 21px; height: 21px; }
.fav.dim { color: #1f8ad2; }
.fav.strong { color: #1563b8; }
.tab-t { width: 62px; margin-left: 12px; font-size: 14px; line-height: 20px; white-space: nowrap; overflow: hidden; color: #16202a; letter-spacing: -.1px; -webkit-mask-image: linear-gradient(90deg, #000 72%, transparent 100%); mask-image: linear-gradient(90deg, #000 72%, transparent 100%); }
.tab-x { width: 14px; height: 14px; margin-left: 5px; }
.tab.active { height: 40px; align-self: flex-start; background: #84eeee; border-right: 0; border-radius: 9px 9px 0 0; }
.tab.active::before, .tab.active::after { content: ""; position: absolute; bottom: 0; width: 8px; height: 8px; }
.tab.active::before { left: -8px; background: radial-gradient(circle at 0 0, transparent 7.5px, #84eeee 8px); }
.tab.active::after { right: -8px; background: radial-gradient(circle at 100% 0, transparent 7.5px, #84eeee 8px); }
.plus { width: 44px; height: 40px; }
.win-btns { margin-left: auto; display: flex; }
.win-btn { width: 57px; height: 40px; }
.win-btn:last-child { width: 58px; }

/* toolbar */
.toolbar { height: 45px; flex: none; display: flex; align-items: center; padding-left: 7px; }
.nav-btn { width: 55px; height: 37px; }
.address { width: 1326px; height: 37px; margin-left: 8px; margin-top: 1px; background: #e6fcfc; border-radius: 19px; display: flex; align-items: center; padding: 0 6px 0 23px; flex: none; }
.lock { width: 18px; height: 20px; }
.url { flex: 1; margin-left: 20px; font-size: 16.6px; color: #111; white-space: nowrap; overflow: hidden; }
.url-scheme { color: #666; }
.addr-btn { width: 50px; height: 37px; }
.star { color: #555; }
.tool-btn { width: 56px; height: 40px; flex: none; }
.tool-btn.first { margin-left: 7px; }
.tool-btn.copilot { margin-left: 3px; }
.tool-sep { width: 2px; height: 24px; margin: 0 0 0 2px; background: #5faeae; flex: none; }
.avatar { width: 30px; height: 30px; border-radius: 50%; background: #f6fefe; display: flex; align-items: center; justify-content: center; }

/* workspace */
.workspace { flex: 1; min-height: 0; display: flex; }
.main-col { width: 1853px; flex: none; display: flex; flex-direction: column; min-height: 0; }

.bookmarks { height: 44px; flex: none; display: grid; grid-template-columns: 88px 108px 87px 80px 84px 154px 87px 109px 124px 191px 94px 191px 240px 28px 22px auto; align-items: center; padding: 0 0 3px 18px; font-size: 14px; color: #111; }
.bm { display: flex; align-items: center; gap: 10px; white-space: nowrap; }
.bm-i { width: 20px; height: 20px; }
.bm-more { width: 28px; height: 28px; }
.bm-sep { width: 1px; height: 24px; margin-left: 10px; background: #5faeae; }

.viewport { flex: 1; min-height: 0; display: flex; }
.page { width: 1834px; flex: none; background: #fff; overflow: hidden; color: #212529; font-size: 19px; letter-spacing: -.15px; }

.site-nav { height: 90px; background: #212529; display: flex; align-items: center; padding: 0 187px 0 117px; color: #fff; }
.site-link { display: flex; align-items: center; gap: 10px; }
.home-i { width: 20px; height: 18px; }
.cart-badge { width: 19px; height: 26px; margin: 0 5px 22px 15px; border-radius: 50%; background: #00f; color: #fff; font-size: 12px; letter-spacing: 0; display: flex; align-items: center; justify-content: center; }
.cart-link { gap: 12px; }
.site-search { margin-left: auto; display: flex; }
.site-search-in { width: 258px; height: 47px; background: transparent; border: 1px solid #dee2e6; border-radius: 8px; }
.site-search-btn { width: 52px; height: 47px; background: #0d6efd; border-radius: 8px; }

.signin { width: 459px; margin: 0 0 0 687px; padding-top: 61px; display: flex; flex-direction: column; }
.signin-title { margin: 0 0 19px; padding-left: 1px; font-size: 32.8px; line-height: 42px; font-weight: 400; letter-spacing: 0; }
.field { height: 73px; padding: 0 16px; border: 1px solid #dee2e6; border-radius: 8px; font: inherit; letter-spacing: inherit; color: #212529; background: #fff; }
.field::placeholder { color: #212529; opacity: 1; }
.field-b { height: 72px; margin-top: 10px; }
.signin-btn { height: 52px; margin-top: 10px; background: #0d6efd; color: #fff; border-radius: 8px; letter-spacing: inherit; }
.signin-copy { margin: 61px 0 0; padding-left: 1px; line-height: 30px; color: #6c757d; }

.site-footer { margin: 59px 92px 0; border-top: 1px solid #dee2e6; padding-top: 60px; display: grid; grid-template-columns: 660px 330px 330px 330px; }
.foot-copy { padding: 21px 0 0 15px; line-height: 30px; color: #6c757d; }
.foot-col { padding-left: 15px; }
.foot-col h5 { margin: 0 0 6px; font-size: 24px; line-height: 30px; font-weight: 500; color: #212529; letter-spacing: 0; }
.foot-col ul { margin: 0; padding: 0; list-style: none; color: #6c757d; }
.foot-col li { height: 40px; line-height: 40px; }

.scrollbar { width: 19px; flex: none; background: #fdfdfd; display: flex; flex-direction: column; align-items: center; }
.sb-up { margin-top: 6px; width: 0; height: 0; border: 5.5px solid transparent; border-top: 0; border-bottom: 7px solid #8b8b8b; }
.sb-thumb { width: 11px; height: 744px; margin-top: 7px; background: #8b8b8b; border-radius: 6px; }
.sb-down { margin-top: 115px; width: 0; height: 0; border: 5.5px solid transparent; border-bottom: 0; border-top: 7px solid #8b8b8b; }

/* edge sidebar */
.sidebar { width: 67px; flex: none; margin-top: 3px; border-left: 1px solid #5fb5b5; display: flex; flex-direction: column; align-items: center; justify-content: space-between; padding: 16px 0 16px; }
.side-top, .side-bottom { display: flex; flex-direction: column; align-items: center; }
.side-top { gap: 27px; }
.side-i { width: 23px; height: 23px; }
.side-tp { height: 23px; font-size: 19px; line-height: 23px; font-weight: 700; letter-spacing: -1px; }
.tp-t { color: #ea9048; }
.tp-p { color: #c9614a; }
.side-sep { width: 35px; height: 1px; background: #5fb5b5; }
.side-top .side-sep { margin-top: 2px; }
.side-add { width: 15px; height: 15px; }
.side-top .side-add { margin-top: 3px; }
.side-panel { width: 20px; height: 20px; margin-top: 17px; }
.side-gear { width: 22px; height: 22px; margin-top: 29px; }

/* taskbar */
.taskbar { height: 60px; flex: none; background: #d8d8d8; border-top: 2px solid #b5b5b5; display: flex; align-items: center; padding-bottom: 2px; position: relative; }
.weather { width: 419px; flex: none; display: flex; align-items: center; padding-left: 24px; }
.weather-icon { width: 32px; height: 48px; position: relative; }
.sun { width: 32px; height: 48px; }
.weather-badge { position: absolute; left: 15px; top: -3px; width: 20px; height: 24px; border-radius: 50%; background: #c42b1c; color: #fff; font-size: 13px; display: flex; align-items: center; justify-content: center; }
.weather-text { margin-left: 8px; display: flex; flex-direction: column; font-size: 14px; line-height: 20px; color: #222; }
.w-name { color: #444; }
.task-center { display: flex; align-items: center; }
.start { width: 29px; height: 29px; }
.task-search { width: 273px; height: 38px; margin: 0 3px 0 19px; border-radius: 19px; background: #f2f2f2; border-bottom: 1px solid #b8b8b8; display: flex; align-items: center; padding-left: 14px; }
.task-search-t { margin-left: 11px; font-size: 16px; color: #444; flex: 1; }
.mosque { width: 60px; height: 32px; margin: 2px 5px 0 0; }
.task-i { width: 55px; height: 48px; flex: none; display: flex; align-items: center; justify-content: center; position: relative; }
.task-i .ic32 { width: 30px; height: 30px; }
.pre { font: 700 8px "Noto Sans", sans-serif; fill: #111; }
.files::after, .code::after { content: ""; position: absolute; bottom: -2px; left: 25px; width: 6px; height: 6px; border-radius: 50%; background: #777; }
.edge::before { content: ""; position: absolute; left: 3px; right: 3px; top: 0; bottom: 0; background: #efefef; border-radius: 5px; }
.edge svg { position: relative; }
.edge::after { content: ""; position: absolute; left: 17px; bottom: 2px; width: 20px; height: 4px; border-radius: 2px; background: #0a7cd8; }
.app-badge { position: absolute; top: 1px; right: 4px; width: 20px; height: 24px; border-radius: 50%; background: #0f78d4; color: #fff; font-size: 13px; display: flex; align-items: center; justify-content: center; }
.tray { margin-left: auto; display: flex; align-items: center; height: 100%; padding-right: 27px; position: relative; }
.tray-up { width: 15px; height: 10px; }
.tray-bt { width: 15px; height: 24px; margin-left: 25px; }
.lang { width: 30px; margin-left: 25px; display: flex; flex-direction: column; align-items: center; font-size: 15px; line-height: 21px; color: #222; }
.tray-wifi { width: 20px; height: 20px; margin-left: 22px; }
.tray-vol { width: 20px; height: 20px; margin-left: 10px; }
.tray-bat { width: 22px; height: 20px; margin-left: 9px; }
.clock { width: 84px; margin-left: 13px; display: flex; flex-direction: column; align-items: flex-end; font-size: 15px; line-height: 21px; color: #222; white-space: nowrap; }
.tray-bell { width: 16px; height: 20px; margin-left: 11px; }
```
